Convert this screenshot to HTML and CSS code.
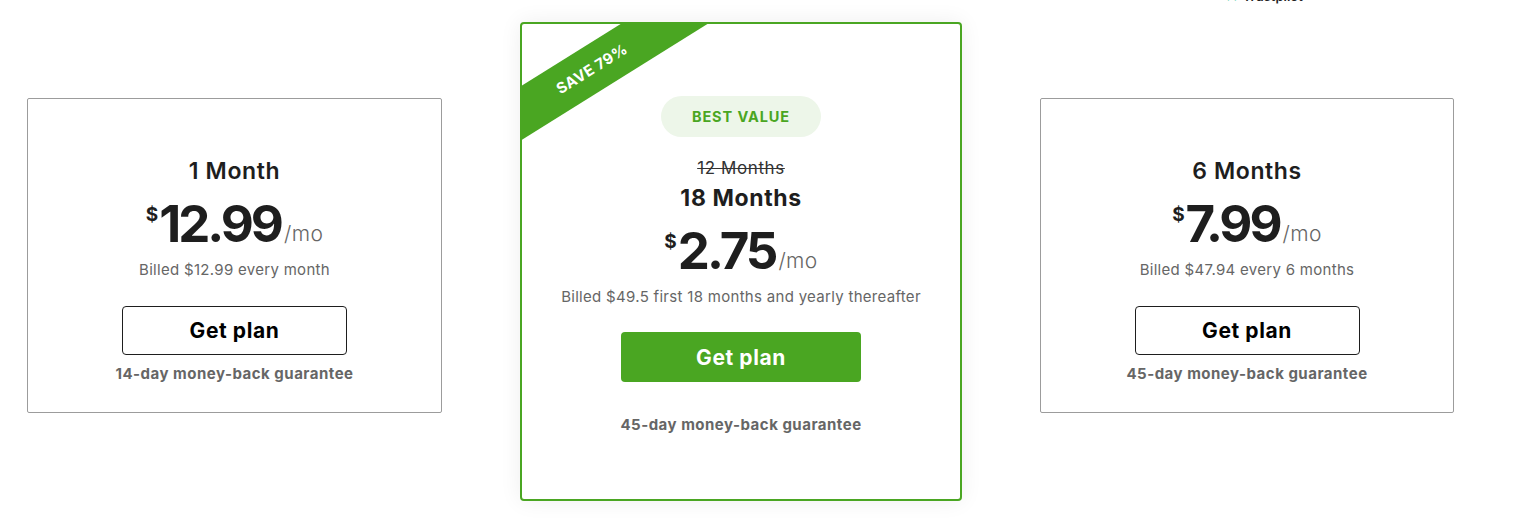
FILE: index.html
```html
<!DOCTYPE html>
<html lang="en">
<head>
<meta charset="utf-8">
<title>Plans</title>
<link rel="stylesheet" href="styles.css">
</head>
<body>
<div class="page">
  <div class="topbar">
    <div class="tp"><span class="tp-star">★</span><span class="tp-text">Trustpilot</span></div>
  </div>
  <div class="plans">
    <div class="card side">
      <div class="title">1 Month</div>
      <div class="price"><span class="cur">$</span><span class="amt">12.99</span><span class="per">/mo</span></div>
      <div class="billed">Billed $12.99 every month</div>
      <a class="btn btn-outline" href="#">Get plan</a>
      <div class="guar">14-day money-back guarantee</div>
    </div>
    <div class="card featured">
      <div class="ribbon">SAVE 79%</div>
      <div class="badge">BEST VALUE</div>
      <div class="old">12 Months</div>
      <div class="title title-f">18 Months</div>
      <div class="price"><span class="cur">$</span><span class="amt">2.75</span><span class="per">/mo</span></div>
      <div class="billed">Billed $49.5 first 18 months and yearly thereafter</div>
      <a class="btn btn-green" href="#">Get plan</a>
      <div class="guar guar-f">45-day money-back guarantee</div>
    </div>
    <div class="card side side-r">
      <div class="title">6 Months</div>
      <div class="price"><span class="cur">$</span><span class="amt">7.99</span><span class="per">/mo</span></div>
      <div class="billed">Billed $47.94 every 6 months</div>
      <a class="btn btn-outline" href="#">Get plan</a>
      <div class="guar">45-day money-back guarantee</div>
    </div>
  </div>
</div>
</body>
</html>
```
FILE: styles.css
```css
* { box-sizing: border-box; }
html, body { margin: 0; padding: 0; background: #fff; }
body {
  font-family: Inter, "Open Sans", "Liberation Sans", sans-serif;
  color: #1e1e1e;
  overflow: hidden;
}
.page { width: 1517px; height: 531px; }
.topbar {
  height: 22px;
  display: flex;
  padding-left: 1224px;
  overflow: hidden;
}
.tp {
  margin-top: -12px;
  display: flex;
  align-items: baseline;
  gap: 3px;
  line-height: 16px;
  height: 16px;
}
.tp-star { color: #00b67a; font-size: 15px; }
.tp-text { font-size: 13px; font-weight: 600; color: #222; }

.plans {
  display: flex;
  align-items: flex-start;
  gap: 78px;
  padding-left: 27px;
}
.card {
  display: flex;
  flex-direction: column;
  align-items: center;
  text-align: center;
  background: #fff;
}
.side {
  width: 415px;
  margin-top: 76px;
  border: 1px solid #9c9c9c;
  border-radius: 2px;
  padding: 58px 0 28px;
}
.side-r { width: 414px; }
.featured {
  position: relative;
  overflow: hidden;
  width: 442px;
  height: 479px;
  border: 2px solid #4aa622;
  border-radius: 4px;
  padding-top: 72px;
  box-shadow: 0 0 22px rgba(0, 0, 0, 0.07);
}
.ribbon {
  position: absolute;
  left: -80px;
  top: 22px;
  width: 300px;
  height: 46px;
  line-height: 46px;
  background: #4aa622;
  color: #fff;
  font-size: 15px;
  font-weight: 700;
  letter-spacing: 0.4px;
  transform: rotate(-32deg);
  text-align: center;
}
.badge {
  width: 160px;
  height: 41px;
  line-height: 41px;
  border-radius: 21px;
  background: #edf6e9;
  color: #4aa622;
  font-size: 14.5px;
  font-weight: 700;
  letter-spacing: 0.9px;
}
.old {
  margin-top: 21px;
  font-size: 17px;
  line-height: 20px;
  color: #333;
  letter-spacing: 0.6px;
  text-decoration: line-through;
}
.title {
  font-size: 23px;
  line-height: 28px;
  font-weight: 600;
  letter-spacing: 0.6px;
  color: #1e1e1e;
}
.title-f { margin-top: 6px; font-weight: 700; }
.price {
  margin-top: 13px;
  display: flex;
  align-items: flex-start;
  height: 52px;
}
.cur {
  font-size: 19px;
  font-weight: 700;
  line-height: 19px;
  margin-top: 7px;
  margin-right: 1px;
}
.amt {
  font-size: 51px;
  line-height: 52px;
  font-weight: 700;
  letter-spacing: -3px;
  margin-right: 3px;
}
.per {
  align-self: flex-end;
  font-size: 21px;
  line-height: 20px;
  font-weight: 300;
  color: #666;
  margin-bottom: 6px;
  letter-spacing: 0.4px;
}
.billed {
  margin-top: 10px;
  font-size: 15px;
  line-height: 20px;
  color: #666;
  letter-spacing: 0.3px;
}
.btn {
  display: flex;
  align-items: center;
  justify-content: center;
  text-decoration: none;
  font-size: 21px;
  font-weight: 700;
  letter-spacing: 0.6px;
  border-radius: 4px;
}
.btn-outline {
  margin-top: 26px;
  width: 225px;
  height: 49px;
  border: 1px solid #1e1e1e;
  color: #000;
}
.btn-green {
  margin-top: 25px;
  width: 240px;
  height: 50px;
  background: #4aa622;
  color: #fff;
}
.guar {
  margin-top: 9px;
  font-size: 15px;
  line-height: 20px;
  font-weight: 700;
  color: #666;
  letter-spacing: 0.5px;
}
.guar-f { margin-top: 33px; }
```
